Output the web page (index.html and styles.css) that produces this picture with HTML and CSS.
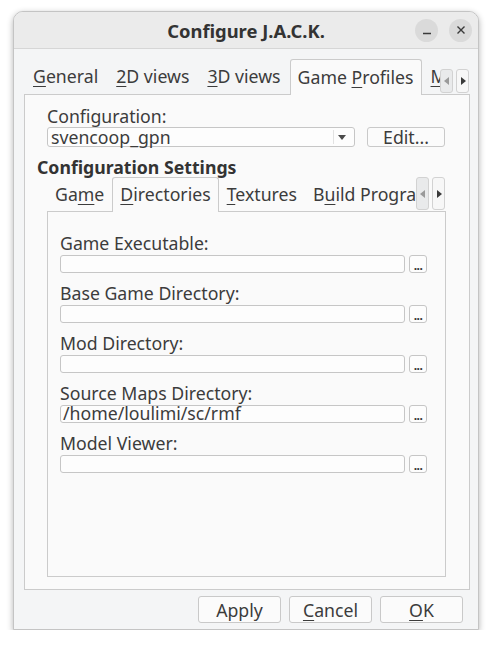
FILE: index.html
```html
<!DOCTYPE html>
<html lang="en">

<head>
    <meta charset="UTF-8">
    <meta name="viewport" content="width=device-width, initial-scale=1.0">
    <title>Configure J.A.C.K.</title>
    <link rel="stylesheet" href="styles.css">
</head>

<body>
    <div class="window">
        <div class="titlebar">
            <span></span>
            <span class="title">Configure J.A.C.K.</span>
            <div class="wm-buttons">
                <span class="wm-btn">
                    <svg width="10" height="10" viewBox="0 0 10 10"><path d="M1 8.5h8" stroke="#3a3a3a" stroke-width="1.3"/></svg>
                </span>
                <span class="wm-btn">
                    <svg width="10" height="10" viewBox="0 0 10 10"><path d="M1.5 1.5l7 7M8.5 1.5l-7 7" stroke="#3a3a3a" stroke-width="1.4"/></svg>
                </span>
            </div>
        </div>

        <div class="content">
            <div class="tabbar">
                <div class="tab-list">
                    <span class="tab"><u>G</u>eneral</span>
                    <span class="tab"><u>2</u>D views</span>
                    <span class="tab"><u>3</u>D views</span>
                    <span class="tab active">Game <u>P</u>rofiles</span>
                    <span class="tab"><u>M</u>aps</span>
                </div>
                <div class="scroll-btns">
                    <span class="scroll-btn disabled">
                        <svg width="6" height="8" viewBox="0 0 6 8"><path d="M5 0v8L0 4z" fill="#9a9a9a"/></svg>
                    </span>
                    <span class="scroll-btn">
                        <svg width="6" height="8" viewBox="0 0 6 8"><path d="M1 0v8l5-4z" fill="#3a3a3a"/></svg>
                    </span>
                </div>
            </div>

            <div class="pane">
                <div class="config">
                    <div class="label">Configuration:</div>
                    <div class="config-row">
                        <div class="combo">
                            <span class="combo-text">svencoop_gpn</span>
                            <span class="combo-arrow"></span>
                        </div>
                        <span class="btn edit">Edit...</span>
                    </div>
                </div>

                <h3 class="section">Configuration Settings</h3>

                <div class="subtabs">
                    <div class="tabbar small">
                        <div class="tab-list">
                            <span class="tab">Ga<u>m</u>e</span>
                            <span class="tab active"><u>D</u>irectories</span>
                            <span class="tab"><u>T</u>extures</span>
                            <span class="tab">B<u>u</u>ild Programs</span>
                        </div>
                        <div class="scroll-btns">
                            <span class="scroll-btn disabled">
                                <svg width="6" height="8" viewBox="0 0 6 8"><path d="M5 0v8L0 4z" fill="#9a9a9a"/></svg>
                            </span>
                            <span class="scroll-btn">
                                <svg width="6" height="8" viewBox="0 0 6 8"><path d="M1 0v8l5-4z" fill="#3a3a3a"/></svg>
                            </span>
                        </div>
                    </div>

                    <div class="subpane">
                        <div class="field-group">
                            <div class="label">Game Executable:</div>
                            <div class="field-row">
                                <span class="field"></span>
                                <span class="browse">...</span>
                            </div>
                        </div>
                        <div class="field-group">
                            <div class="label">Base Game Directory:</div>
                            <div class="field-row">
                                <span class="field"></span>
                                <span class="browse">...</span>
                            </div>
                        </div>
                        <div class="field-group">
                            <div class="label">Mod Directory:</div>
                            <div class="field-row">
                                <span class="field"></span>
                                <span class="browse">...</span>
                            </div>
                        </div>
                        <div class="field-group">
                            <div class="label">Source Maps Directory:</div>
                            <div class="field-row">
                                <span class="field">/home/loulimi/sc/rmf</span>
                                <span class="browse">...</span>
                            </div>
                        </div>
                        <div class="field-group">
                            <div class="label">Model Viewer:</div>
                            <div class="field-row">
                                <span class="field"></span>
                                <span class="browse">...</span>
                            </div>
                        </div>
                    </div>
                </div>
            </div>

            <div class="buttons">
                <span class="btn">Apply</span>
                <span class="btn"><u>C</u>ancel</span>
                <span class="btn"><u>O</u>K</span>
            </div>
        </div>
    </div>
</body>

</html>
```

FILE: styles.css
```css
body {
    margin: 0;
    background-color: #fff;
    font-family: "Noto Sans", "DejaVu Sans", sans-serif;
    font-size: 17.7px;
    color: #3c3c3c;
}

u {
    text-decoration-thickness: 1px;
    text-underline-offset: 3px;
}

.window {
    margin: 11px 0 0 13px;
    width: 464px;
    border: 1px solid #c4c4c4;
    border-radius: 10px 10px 0 0;
    background-color: #f4f5f6;
    box-shadow: 0 2px 6px rgba(0, 0, 0, 0.3);
    overflow: hidden;
}

/* title bar */
.titlebar {
    height: 36px;
    display: grid;
    grid-template-columns: 1fr auto 1fr;
    align-items: center;
    background-color: #ebebeb;
    border-bottom: 1px solid #d6d6d6;
}

.title {
    font-size: 18.4px;
    font-weight: bold;
    color: #333;
}

.wm-buttons {
    justify-self: end;
    display: flex;
    gap: 11px;
    padding-right: 6px;
}

.wm-btn {
    width: 23px;
    height: 23px;
    border-radius: 50%;
    background-color: #dadada;
    display: flex;
    align-items: center;
    justify-content: center;
}

.content {
    padding: 10px 8px 6px 10px;
}

/* tabs */
.tabbar {
    display: flex;
    height: 36px;
}

.tab-list {
    flex: 1;
    display: flex;
    overflow: hidden;
    white-space: nowrap;
}

.tab {
    padding: 0 9px;
    line-height: 35px;
}

.tab.active {
    background-color: #fafafa;
    border: 1px solid #cbcbcb;
    border-bottom: none;
    border-radius: 3px 3px 0 0;
    padding: 0 7px;
    line-height: 34px;
    position: relative;
    z-index: 1;
}

.scroll-btns {
    display: flex;
    gap: 3px;
    align-self: flex-end;
    margin: 0 1px 2px 0;
}

.scroll-btn {
    width: 11px;
    height: 22px;
    border: 1px solid #d2d2d2;
    border-radius: 3px;
    background-color: #f7f7f7;
    display: flex;
    align-items: center;
    justify-content: center;
}

.scroll-btn.disabled {
    background-color: #e9eaeb;
}

.tabbar.small {
    height: 35px;
}

.tabbar.small .tab {
    padding: 0 8px;
    line-height: 34px;
}

.tabbar.small .tab.active {
    padding: 0 7px;
    line-height: 33px;
}

.tabbar.small .scroll-btn {
    height: 31px;
}

/* outer pane */
.pane {
    background-color: #fafafa;
    border: 1px solid #cbcbcb;
    margin-top: -1px;
    padding: 11px 23px 12px 12px;
}

.config {
    margin-left: 10px;
}

.label {
    line-height: 20px;
}

.config-row {
    display: flex;
    gap: 12px;
    margin-top: 1px;
}

.combo {
    width: 306px;
    height: 18px;
    border: 1px solid #c6c6c6;
    border-radius: 3px;
    background-color: #fdfdfd;
    display: flex;
    align-items: center;
    justify-content: space-between;
}

.combo-text {
    padding-left: 3px;
    line-height: 18px;
}

.combo-arrow {
    width: 20px;
    height: 14px;
    border-left: 1px solid #e2e2e2;
    position: relative;
}

.combo-arrow::after {
    content: "";
    position: absolute;
    left: 4px;
    top: 5px;
    border-left: 4px solid transparent;
    border-right: 4px solid transparent;
    border-top: 5px solid #4a4a4a;
}

.btn {
    width: 81px;
    height: 25px;
    border: 1px solid #c9c9c9;
    border-radius: 3px;
    background-color: #fbfbfb;
    display: flex;
    align-items: center;
    justify-content: center;
}

.btn.edit {
    width: 76px;
    height: 18px;
}

.section {
    margin: 11px 0 0 0;
    font-size: 17.7px;
    line-height: 19px;
    color: #333;
}

.subtabs {
    margin-left: 10px;
}

.subpane {
    height: 343px;
    border: 1px solid #cbcbcb;
    margin-top: -1px;
    padding: 21px 18px 0 12px;
}

.field-group {
    margin-bottom: 10px;
}

.field-row {
    display: flex;
    gap: 4px;
    margin-top: 2px;
}

.field {
    width: 344px;
    height: 16px;
    border: 1px solid #c6c6c6;
    border-radius: 3px;
    background-color: #fdfdfd;
    padding-left: 2px;
    line-height: 15px;
    white-space: nowrap;
}

.browse {
    width: 16px;
    height: 16px;
    border: 1px solid #c6c6c6;
    border-radius: 3px;
    background-color: #fdfdfd;
    color: #333;
    font-size: 12px;
    font-weight: bold;
    line-height: 19px;
    letter-spacing: -0.5px;
    text-align: center;
    overflow: hidden;
}

/* dialog buttons */
.buttons {
    display: flex;
    justify-content: flex-end;
    gap: 8px;
    margin: 6px 7px 0 0;
}
```
